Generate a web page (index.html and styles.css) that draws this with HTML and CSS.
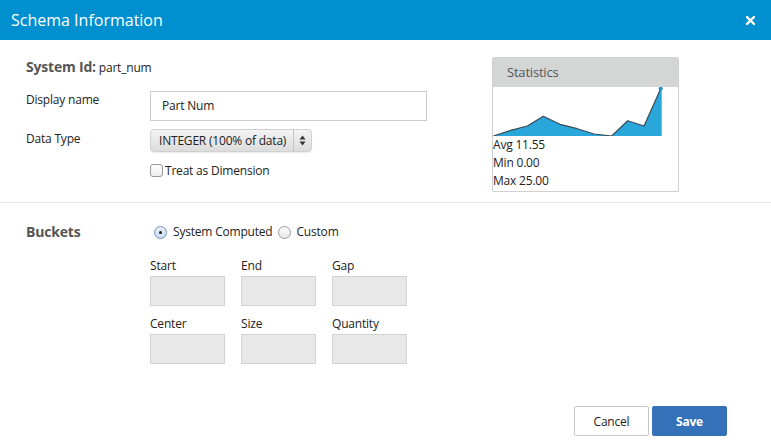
FILE: index.html
```html
<!DOCTYPE html>
<html>
<head>
<meta charset="utf-8">
<link rel="stylesheet" href="styles.css">
</head>
<body>
<div class="dialog">
  <div class="header">
    <span class="title">Schema Information</span>
    <svg class="close" width="9" height="9" viewBox="0 0 9 9"><path d="M1 1L8 8M8 1L1 8" stroke="#fff" stroke-width="2.4" stroke-linecap="square"/></svg>
  </div>
  <div class="top">
    <div class="form">
      <div class="sysid"><b>System Id:</b> part_num</div>
      <div class="row r-name">
        <label class="lbl">Display name</label>
        <div class="text-input">Part Num</div>
      </div>
      <div class="row r-type">
        <label class="lbl">Data Type</label>
        <div class="select"><span class="sel-text">INTEGER (100% of data)</span><span class="sel-arrows"><svg width="7" height="11" viewBox="0 0 7 11"><path d="M3.5 0.5L6.5 4.5H0.5Z M3.5 10.5L6.5 6.5H0.5Z" fill="#333"/></svg></span></div>
      </div>
      <div class="row r-check">
        <span class="lbl"></span>
        <span class="check"></span><span class="check-text">Treat as Dimension</span>
      </div>
    </div>
    <div class="stats">
      <div class="stats-head">Statistics</div>
      <svg class="chart" width="185" height="49" viewBox="0 0 185 49">
        <path d="M0.3 49 L17.7 43.3 L34.3 39 L50.3 29.3 L67 37.3 L84.3 41.7 L101 47 L118.7 49 L134.7 33.7 L151 39 L167.7 1.7 L168.7 1.7 L168.7 49 Z" fill="#29a6da"/>
        <path d="M0.3 49 L17.7 43.3 L34.3 39 L50.3 29.3 L67 37.3 L84.3 41.7 L101 47 L118.7 49 L134.7 33.7 L151 39 L167.7 1.7" fill="none" stroke="#3a4a55" stroke-width="1.2" stroke-linejoin="round"/>
        <circle cx="167.7" cy="1.7" r="2" fill="#1b8fd0"/>
      </svg>
      <div class="stat">Avg 11.55</div>
      <div class="stat">Min 0.00</div>
      <div class="stat">Max 25.00</div>
    </div>
  </div>
  <div class="buckets">
    <div class="b-row">
      <span class="b-title">Buckets</span>
      <span class="radio on"></span><span class="radio-text">System Computed</span>
      <span class="radio"></span><span class="radio-text">Custom</span>
    </div>
    <div class="grid">
      <div class="field"><div class="f-lbl">Start</div><div class="f-in"></div></div>
      <div class="field"><div class="f-lbl">End</div><div class="f-in"></div></div>
      <div class="field"><div class="f-lbl">Gap</div><div class="f-in"></div></div>
      <div class="field"><div class="f-lbl">Center</div><div class="f-in"></div></div>
      <div class="field"><div class="f-lbl">Size</div><div class="f-in"></div></div>
      <div class="field"><div class="f-lbl">Quantity</div><div class="f-in"></div></div>
    </div>
  </div>
  <div class="footer">
    <button class="btn cancel">Cancel</button>
    <button class="btn save">Save</button>
  </div>
</div>
</body>
</html>
```

FILE: styles.css
```css
* { box-sizing: border-box; }
html, body { margin: 0; padding: 0; background: #fff; }
body {
  font-family: "Open Sans", "Noto Sans", sans-serif;
  font-size: 12px;
  letter-spacing: -0.2px;
  color: #222;
  width: 771px;
  height: 448px;
  overflow: hidden;
}
.header {
  height: 40px;
  background: #0090cf;
  display: flex;
  align-items: center;
  justify-content: space-between;
  padding: 0 16px 0 11px;
}
.title {
  color: #fff;
  font-size: 16px;
  letter-spacing: 0;
}
.close { display: block; margin-top: 0; }

.top {
  height: 163px;
  border-bottom: 1px solid #e6e6e6;
  display: flex;
  padding: 17px 0 0 26px;
}
.form { width: 466px; }
.sysid {
  margin-top: 1px;
  line-height: 18px;
  font-size: 12px;
  color: #222;
}
.sysid b { font-size: 14px; color: #555; font-weight: 700; }
.row { display: flex; }
.lbl { width: 124px; flex: none; color: #222; }
.r-name { margin-top: 14px; }
.r-name .lbl { line-height: 18px; }
.text-input {
  width: 277px;
  height: 30px;
  border: 1px solid #ccc;
  line-height: 28px;
  padding-left: 11px;
  color: #222;
}
.r-type { margin-top: 8px; align-items: center; }
.r-type .lbl { margin-top: -5px; }
.select {
  width: 162px;
  height: 23px;
  border-radius: 4px;
  background: linear-gradient(#f4f4f4, #dcdcdc);
  border: 1px solid #d0d0d0;
  display: flex;
  align-items: center;
  box-shadow: 0 1px 1px rgba(0,0,0,0.08);
}
.sel-text { padding-left: 8px; width: 143px; border-right: 1px solid #c4c4c4; line-height: 21px; color: #222; }
.sel-arrows { flex: 1; display: flex; justify-content: center; align-items: center; }
.sel-arrows svg { display: block; }
.r-check { margin-top: 11px; align-items: center; line-height: 15px; }
.check {
  width: 13px; height: 13px;
  border: 1px solid #9a9a9a;
  border-radius: 3px;
  background: linear-gradient(#fff, #ececec);
  margin-right: 2px;
}
.check-text { color: #222; }

.stats {
  width: 187px;
  height: 135px;
  border: 1px solid #d0d0d0;
  border-radius: 2px 2px 0 0;
}
.stats-head {
  height: 29px;
  background: #d4d5d5;
  font-size: 13px;
  color: #555;
  line-height: 29px;
  padding-left: 14px;
}
.chart { display: block; }
.stat { line-height: 18px; color: #222; }

.buckets { padding: 20px 0 0 26px; }
.b-row { display: flex; align-items: center; line-height: 18px; }
.b-title { width: 128px; font-weight: 700; font-size: 14px; color: #555; }
.radio {
  width: 13px; height: 13px;
  border: 1px solid #9a9a9a;
  border-radius: 50%;
  background: linear-gradient(#fff, #e6e6e6);
  margin-right: 6px;
  position: relative;
}
.radio.on { border-color: #6c8fbf; background: linear-gradient(#e8f1fb, #c9dcf2); }
.radio.on::after {
  content: "";
  position: absolute;
  left: 4px; top: 4px;
  width: 3px; height: 3px;
  border-radius: 50%;
  background: #222;
}
.radio-text { margin-right: 5px; color: #222; }
.grid {
  margin: 17px 0 0 124px;
  display: grid;
  grid-template-columns: 75px 75px 75px;
  column-gap: 16px;
  row-gap: 10px;
}
.f-lbl { line-height: 16px; margin-bottom: 2px; color: #222; }
.f-in { height: 30px; background: #e8e8e8; border: 1px solid #d2d2d2; }

.footer {
  display: flex;
  justify-content: flex-end;
  padding-right: 44px;
  margin-top: 42px;
  gap: 3px;
}
.btn {
  width: 75px;
  height: 30px;
  font-family: inherit;
  font-size: 12px;
  letter-spacing: -0.2px;
  border-radius: 2px;
  cursor: pointer;
}
.cancel { background: #fff; border: 1px solid #c8c8c8; color: #222; }
.save { background: #3571b8; border: 1px solid #3571b8; color: #fff; font-weight: 700; }
```
